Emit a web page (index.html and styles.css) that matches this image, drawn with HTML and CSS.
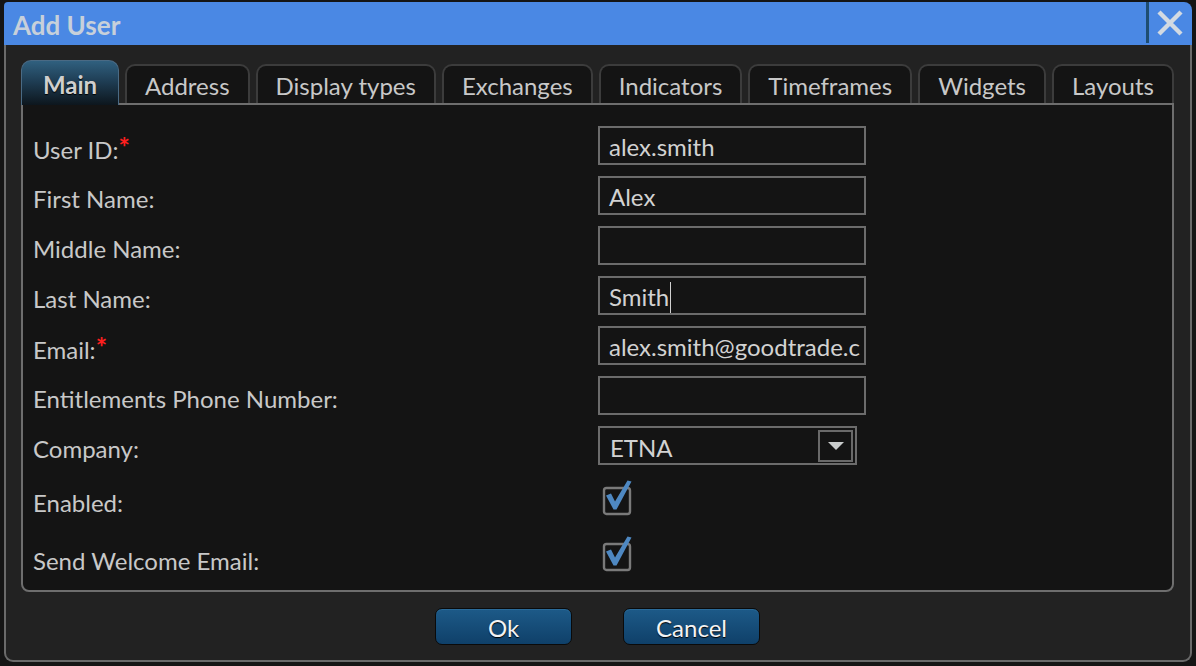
FILE: index.html
```html
<!DOCTYPE html>
<html>
<head>
<meta charset="utf-8">
<link rel="stylesheet" href="styles.css">
</head>
<body>
<div class="dialog">
  <div class="titlebar">
    <span class="title">Add User</span>
    <button class="close" aria-label="Close">
      <svg width="28" height="28" viewBox="0 0 28 28"><path d="M3 3 L25 25 M25 3 L3 25" stroke="#d3dae2" stroke-width="4.4" stroke-linecap="butt" fill="none"/></svg>
    </button>
  </div>
  <div class="body">
    <div class="tabs">
      <div class="tab active">Main</div>
      <div class="tab">Address</div>
      <div class="tab">Display types</div>
      <div class="tab">Exchanges</div>
      <div class="tab">Indicators</div>
      <div class="tab">Timeframes</div>
      <div class="tab">Widgets</div>
      <div class="tab">Layouts</div>
    </div>
    <div class="panel">
      <div class="row"><label class="lbl">User ID:<span class="req">*</span></label><div class="input">alex.smith</div></div>
      <div class="row"><label class="lbl">First Name:</label><div class="input">Alex</div></div>
      <div class="row"><label class="lbl">Middle Name:</label><div class="input"></div></div>
      <div class="row"><label class="lbl">Last Name:</label><div class="input">Smith<span class="caret"></span></div></div>
      <div class="row"><label class="lbl">Email:<span class="req">*</span></label><div class="input"><span class="clip">alex.smith@goodtrade.com</span></div></div>
      <div class="row"><label class="lbl">Entitlements Phone Number:</label><div class="input"></div></div>
      <div class="row"><label class="lbl">Company:</label>
        <div class="select"><span class="sel-val">ETNA</span><span class="sel-btn"><svg width="18" height="10" viewBox="0 0 18 10"><path d="M1 1 L17 1 L9 9 Z" fill="#c9cccc"/></svg></span></div>
      </div>
      <div class="row check r-enabled"><label class="lbl">Enabled:</label><span class="cb">
        <svg width="32" height="36" viewBox="0 0 32 36"><rect x="2" y="8" width="26" height="26" rx="2.5" fill="none" stroke="#7a7a7a" stroke-width="2.4"/><path d="M4 15.5 L9 13.5 L13 21.5 L25.5 0.5 L29.5 1.5 L14.5 29.5 L11.5 29.5 Z" fill="#4e88c2"/></svg>
      </span></div>
      <div class="row check r-send"><label class="lbl">Send Welcome Email:</label><span class="cb">
        <svg width="32" height="36" viewBox="0 0 32 36"><rect x="2" y="8" width="26" height="26" rx="2.5" fill="none" stroke="#7a7a7a" stroke-width="2.4"/><path d="M4 15.5 L9 13.5 L13 21.5 L25.5 0.5 L29.5 1.5 L14.5 29.5 L11.5 29.5 Z" fill="#4e88c2"/></svg>
      </span></div>
    </div>
    <div class="actions">
      <button class="btn ok">Ok</button>
      <button class="btn cancel">Cancel</button>
    </div>
  </div>
</div>
</body>
</html>
```
FILE: styles.css
```css
* { box-sizing: border-box; }
html, body { margin: 0; padding: 0; }
body {
  background: #151515;
  width: 1196px;
  height: 666px;
  overflow: hidden;
  font-family: Lato, "Open Sans", "Liberation Sans", sans-serif;
  font-size: 24px;
  color: #c8c8c8;
}
.dialog {
  margin: 2px 0 0 4px;
  width: 1188px;
}
.titlebar {
  height: 43px;
  background: #4a88e4;
  border-radius: 4px 8px 0 0;
  display: flex;
  align-items: center;
}
.title {
  padding-left: 9px;
  font-size: 26px;
  font-weight: bold;
  color: #c7d0da;
  padding-top: 2px;
}
.close {
  margin-left: auto;
  width: 46px;
  height: 41px;
  align-self: flex-start;
  border: none;
  border-left: 3px solid #1e4d72;
  background: transparent;
  padding: 0 0 0 7px;
  display: flex;
  align-items: center;
  justify-content: flex-start;
}
.body {
  background: #222222;
  border: 2px solid #6a6a6a;
  border-top: none;
  border-radius: 0 0 9px 9px;
  padding: 15px 16px 15px 15px;
}
.tabs {
  display: flex;
  align-items: flex-end;
  gap: 6px;
  height: 43px;
}
.tab {
  flex: 1 1 auto;
  height: 39px;
  background: #141414;
  border: 2px solid #3c3c3c;
  border-bottom: none;
  border-radius: 10px 10px 0 0;
  display: flex;
  align-items: center;
  justify-content: center;
  color: #c8c8c8;
  padding: 2px 6px 0;
  white-space: nowrap;
}
.tab.active {
  flex: 0 0 98px;
  height: 45px;
  margin-bottom: -2px;
  position: relative;
  z-index: 1;
  border: 1px solid #4a6a84;
  border-bottom: none;
  background: linear-gradient(#30607f 0%, #1f3e55 45%, #0d161d 100%);
  font-weight: bold;
  color: #cfcfcf;
  text-shadow: 0 1px 1px #000;
  padding-top: 3px;
}
.panel {
  height: 489px;
  background: #141414;
  border: 2px solid #6e6e6e;
  border-radius: 0 0 8px 8px;
  padding: 21px 0 0 10px;
  display: flex;
  flex-direction: column;
}
.row {
  display: flex;
  align-items: center;
  height: 39px;
  flex: 0 0 39px;
  margin-bottom: 11px;
}
.lbl {
  width: 565px;
  flex: 0 0 565px;
  padding-top: 6px;
  white-space: nowrap;
}
.req {
  color: #ff1f1f;
  font-size: 27px;
  font-weight: bold;
  line-height: 1;
  vertical-align: 2px;
}
.input {
  width: 268px;
  height: 39px;
  border: 2px solid #6c6c6c;
  background: #141414;
  padding: 2px 4px 0 9px;
  display: flex;
  align-items: center;
  white-space: nowrap;
  overflow: hidden;
  color: #d2d2d2;
}
.clip {
  display: block;
  overflow: hidden;
  white-space: nowrap;
  width: 253px;
}
.caret {
  display: inline-block;
  width: 1px;
  height: 32px;
  background: #d0d0d0;
  margin-left: 1px;
  margin-top: 2px;
}
.select {
  width: 259px;
  height: 39px;
  border: 2px solid #6c6c6c;
  display: flex;
  align-items: center;
  padding: 0 2px 0 10px;
  color: #d2d2d2;
}
.sel-val { flex: 1; padding-top: 3px; }
.sel-btn {
  width: 35px;
  height: 32px;
  border: 2px solid #6a6a6a;
  display: flex;
  align-items: center;
  justify-content: center;
}
.r-enabled { margin-top: 4px; }
.r-send { margin-top: 6px; }
.r-enabled .lbl { padding-top: 6px; }
.r-send .lbl { padding-top: 9px; }
.cb {
  display: block;
  width: 32px;
  height: 36px;
  margin-left: 4px;
  margin-top: -4px;
}
.cb svg { display: block; }
.actions {
  display: flex;
  justify-content: center;
  gap: 51px;
  padding-top: 16px;
}
.btn {
  width: 137px;
  height: 37px;
  border-radius: 7px;
  border: 1px solid #0a0a0a;
  background: linear-gradient(#1d5a88, #0f4069);
  box-shadow: inset 0 1px 0 #2a6a98;
  color: #f4f4f4;
  font-family: Lato, "Open Sans", "Liberation Sans", sans-serif;
  font-size: 24px;
  padding: 2px 0 0;
  text-shadow: 0 1px 1px #000;
}
```
